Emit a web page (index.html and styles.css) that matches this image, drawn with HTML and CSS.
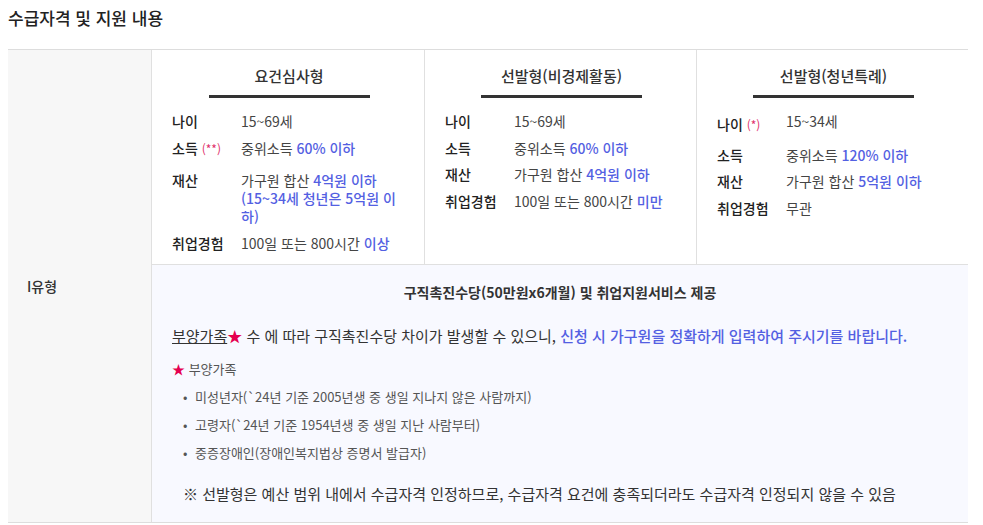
FILE: index.html
```html
<!DOCTYPE html>
<html lang="ko">
<head>
    <meta charset="UTF-8">
    <meta name="viewport" content="width=device-width, initial-scale=1.0">
    <title>수급자격 및 지원 내용</title>
    <link rel="stylesheet" href="styles.css">
</head>
<body>
    <h2 class="title">수급자격 및 지원 내용</h2>

    <div class="info-table">
        <div class="type-cell">I유형</div>

        <div class="type-body">
            <div class="col-row">
                <!-- 요건심사형 -->
                <div class="col">
                    <h3 class="col-head">요건심사형</h3>
                    <dl class="cond">
                        <div class="cond-row"><dt>나이</dt><dd>15~69세</dd></div>
                        <div class="cond-row tall"><dt>소득 <span class="mark">(**)</span></dt><dd>중위소득 <em>60% 이하</em></dd></div>
                        <div class="cond-row"><dt>재산</dt><dd>가구원 합산 <em>4억원 이하<br>(15~34세 청년은 5억원 이하)</em></dd></div>
                        <div class="cond-row"><dt>취업경험</dt><dd>100일 또는 800시간 <em>이상</em></dd></div>
                    </dl>
                </div>
                <!-- 선발형(비경제활동) -->
                <div class="col">
                    <h3 class="col-head">선발형(비경제활동)</h3>
                    <dl class="cond">
                        <div class="cond-row"><dt>나이</dt><dd>15~69세</dd></div>
                        <div class="cond-row"><dt>소득</dt><dd>중위소득 <em>60% 이하</em></dd></div>
                        <div class="cond-row"><dt>재산</dt><dd>가구원 합산 <em>4억원 이하</em></dd></div>
                        <div class="cond-row"><dt>취업경험</dt><dd>100일 또는 800시간 <em>미만</em></dd></div>
                    </dl>
                </div>
                <!-- 선발형(청년특례) -->
                <div class="col">
                    <h3 class="col-head">선발형(청년특례)</h3>
                    <dl class="cond">
                        <div class="cond-row shifted"><dt>나이 <span class="mark">(*)</span></dt><dd>15~34세</dd></div>
                        <div class="cond-row"><dt>소득</dt><dd>중위소득 <em>120% 이하</em></dd></div>
                        <div class="cond-row"><dt>재산</dt><dd>가구원 합산 <em>5억원 이하</em></dd></div>
                        <div class="cond-row"><dt>취업경험</dt><dd>무관</dd></div>
                    </dl>
                </div>
            </div>

            <div class="support">
                <p class="support-title">구직촉진수당(50만원x6개월) 및 취업지원서비스 제공</p>
                <p class="support-desc"><u>부양가족</u><span class="star">★</span> 수 에 따라 구직촉진수당 차이가 발생할 수 있으니, <em>신청 시 가구원을 정확하게 입력하여 주시기를 바랍니다.</em></p>
                <p class="family-head"><span class="star">★</span> 부양가족</p>
                <ul class="family-list">
                    <li>미성년자(`24년 기준 2005년생 중 생일 지나지 않은 사람까지)</li>
                    <li>고령자(`24년 기준 1954년생 중 생일 지난 사람부터)</li>
                    <li>중증장애인(장애인복지법상 증명서 발급자)</li>
                </ul>
                <p class="note">※ 선발형은 예산 범위 내에서 수급자격 인정하므로, 수급자격 요건에 충족되더라도 수급자격 인정되지 않을 수 있음</p>
            </div>
        </div>
    </div>
</body>
</html>
```

FILE: styles.css
```css
body {
    margin: 8px;
    font-family: "Noto Sans CJK KR", "Noto Sans", sans-serif;
    color: #333;
    background: #fff;
}
.title {
    margin: 0 0 21px;
    font-size: 17px;
    line-height: 20px;
    font-weight: 500;
    color: #222;
}

/* 표 */
.info-table {
    width: 960px;
    display: grid;
    grid-template-columns: 143px 1fr;
    border-top: 1px solid #ddd;
    border-bottom: 1px solid #ddd;
}
.type-cell {
    background: #f7f7f7;
    display: flex;
    align-items: center;
    padding-left: 19px;
    font-size: 14px;
    font-weight: 500;
    color: #333;
}
.type-body {
    border-left: 1px solid #e0e0e0;
}
.col-row {
    display: grid;
    grid-template-columns: 272px 272px 1fr;
    border-bottom: 1px solid #e0e0e0;
}
.col {
    padding: 15px 18px 12px 20px;
}
.col + .col {
    border-left: 1px solid #e0e0e0;
}
.col-head {
    margin: 0;
    font-size: 15px;
    line-height: 22px;
    font-weight: 500;
    color: #333;
    text-align: center;
}
.col-head::after {
    content: "";
    display: block;
    width: 161px;
    height: 3px;
    margin: 8px auto 0;
    background: #333;
}
.cond {
    margin: 14px 0 0;
}
.cond-row {
    display: grid;
    grid-template-columns: 69px 1fr;
    margin-bottom: 8.5px;
    font-size: 14px;
    line-height: 18px;
}
.cond-row:last-child {
    margin-bottom: 0;
}
.cond-row.tall {
    padding-bottom: 5px;
}
.cond-row.shifted {
    padding-bottom: 3px;
}
.cond-row.shifted dt {
    padding-top: 3px;
}
.cond dt {
    font-weight: 500;
    color: #222;
}
.cond dd {
    margin: 0;
    color: #444;
}
em {
    font-style: normal;
    font-weight: 500;
    color: #5360e2;
}
.mark {
    font-size: 12px;
    font-weight: 400;
    color: #e0306a;
}

/* 지원 내용 */
.support {
    background: #f8f9ff;
    padding: 17px 20px 17px 20px;
}
.support p {
    margin: 0;
}
.support-title {
    text-align: center;
    font-size: 14px;
    line-height: 20px;
    font-weight: 700;
    color: #333;
}
.support-desc {
    margin-top: 23px !important;
    font-size: 15px;
    line-height: 22px;
    color: #333;
}
.star {
    color: #e5004f;
}
.family-head {
    margin-top: 12px !important;
    font-size: 13px;
    line-height: 20px;
    color: #555;
}
.family-list {
    list-style: none;
    margin: 1px 0 0;
    padding: 0 0 0 11px;
}
.family-list li {
    margin-top: 8px;
    font-size: 13px;
    line-height: 20px;
    color: #555;
}
.family-list li::before {
    content: "•";
    display: inline-block;
    width: 12px;
    color: #555;
}
.note {
    margin-top: 20px !important;
    padding-left: 11px;
    font-size: 15px;
    line-height: 22px;
    color: #333;
}
```
